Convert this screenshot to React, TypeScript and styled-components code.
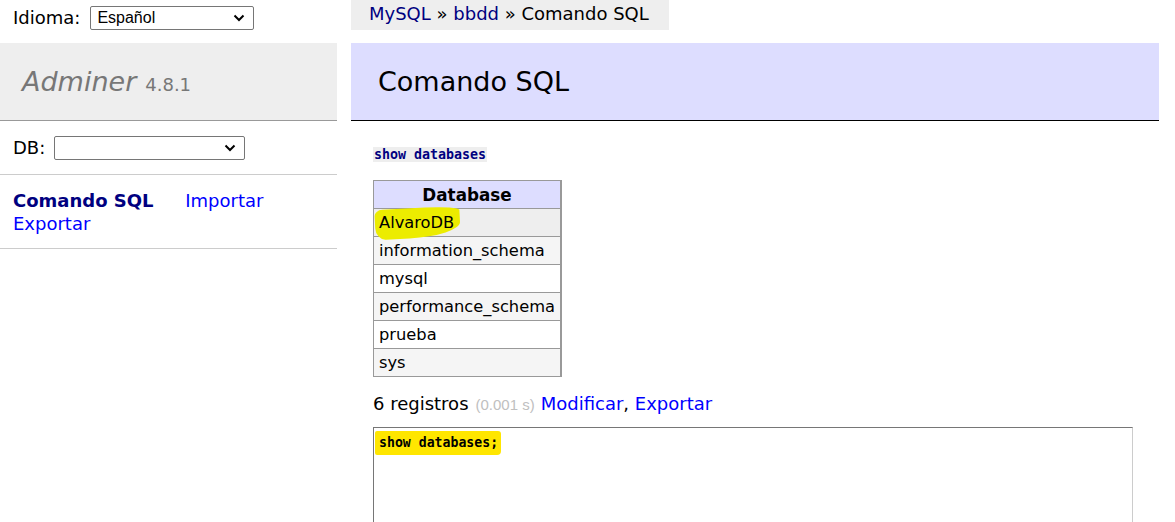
import React from "react";
import styled, { createGlobalStyle } from "styled-components";

const Global = createGlobalStyle`
  html, body { margin: 0; padding: 0; overflow: hidden; background: #fff; }
  body {
    font-family: "DejaVu Sans", Verdana, sans-serif;
    font-size: 18px;
    color: #000;
  }
`;

const Page = styled.div`
  display: flex;
  align-items: flex-start;
  width: 1175px;
  height: 522px;
`;

const Sidebar = styled.aside`
  width: 337px;
  flex: none;
  display: flex;
  flex-direction: column;
`;

const LangRow = styled.form`
  height: 43px;
  display: flex;
  align-items: center;
  padding: 0 0 8px 13px;
  gap: 10px;
  box-sizing: border-box;
  margin: 0;
`;

const FakeSelect = styled.div<{ $w: number }>`
  width: ${(p) => p.$w}px;
  height: 24px;
  box-sizing: border-box;
  border: 1px solid #767676;
  border-radius: 2px;
  background: #fff;
  display: flex;
  align-items: center;
  justify-content: space-between;
  padding: 0 8px 0 6px;
  font-family: "Liberation Sans", Arial, sans-serif;
  font-size: 16px;
  color: #000;
`;

const Logo = styled.h1`
  margin: 0;
  height: 78px;
  box-sizing: border-box;
  background: #eee;
  border-bottom: 1px solid #999;
  padding: 0 0 0 22px;
  display: flex;
  align-items: center;
  font-weight: normal;
  font-size: 27px;
  color: #777;
`;

const LogoName = styled.span`
  font-style: italic;
  margin-right: 9px;
`;

const Version = styled.span`
  font-size: 18px;
  color: #777;
  position: relative;
  top: 3px;
`;

const DbRow = styled.div`
  height: 54px;
  box-sizing: border-box;
  border-bottom: 1px solid #ccc;
  display: flex;
  align-items: center;
  padding-left: 13px;
  gap: 9px;
`;

const Links = styled.p`
  margin: 0;
  padding: 14px 13px 13px 13px;
  border-bottom: 1px solid #ccc;
  line-height: 23px;
`;

const Link = styled.a<{ $visited?: boolean; $bold?: boolean }>`
  color: ${(p) => (p.$visited ? "#000080" : "#0000ff")};
  text-decoration: none;
  font-weight: ${(p) => (p.$bold ? "bold" : "normal")};
  white-space: nowrap;
  margin-right: ${(p) => (p.$bold ? "26px" : "0")};
`;

const Content = styled.main`
  margin-left: 14px;
  width: 808px;
  flex: none;
  display: flex;
  flex-direction: column;
  align-items: flex-start;
`;

const Breadcrumb = styled.p`
  margin: 0;
  height: 30px;
  box-sizing: border-box;
  background: #eee;
  padding: 0 20px 3px 18px;
  display: flex;
  align-items: center;
  white-space: pre;
`;

const Title = styled.h2`
  margin: 13px 0 0 0;
  align-self: stretch;
  height: 78px;
  box-sizing: border-box;
  background: #ddf;
  border-bottom: 1px solid #000;
  display: flex;
  align-items: center;
  padding: 0 0 0 27px;
  font-size: 27px;
  font-weight: normal;
`;

const Body = styled.div`
  padding: 0 0 0 22px;
  display: flex;
  flex-direction: column;
  align-items: flex-start;
`;

const Query = styled.code`
  margin-top: 26px;
  background: #eee;
  color: #000080;
  font-family: "DejaVu Sans Mono", Consolas, monospace;
  font-weight: bold;
  font-size: 13.3px;
  line-height: 15px;
  padding: 0 1px;
`;

const Table = styled.table`
  margin-top: 18px;
  border-collapse: collapse;
  border: 1px solid #999;
  border-right-width: 2px;
  font-size: 16.3px;
`;

const Th = styled.th`
  background: #ddf;
  border: 1px solid #999;
  height: 27px;
  padding: 0 5px;
  font-weight: bold;
  font-size: 16.8px;
  text-align: center;
`;

const Td = styled.td<{ $bg: string }>`
  background: ${(p) => p.$bg};
  border: 1px solid #999;
  height: 27px;
  padding: 0 5px;
  white-space: nowrap;
`;

const Marker = styled.span`
  position: relative;
  display: inline-block;
`;

const MarkerBlob = styled.span`
  position: absolute;
  left: -4px;
  right: -6px;
  top: -5px;
  bottom: -6px;
  background: #ecec00;
  border-radius: 8px 40% 60% 10px / 6px 4px 14px 12px;
  transform: rotate(-3deg);
  z-index: 0;
`;

const MarkerText = styled.span`
  position: relative;
  z-index: 1;
`;

const Stats = styled.p`
  margin: 16px 0 0 0;
  display: flex;
  align-items: baseline;
  white-space: pre;
`;

const Time = styled.span`
  color: #c0c0c0;
  font-size: 15px;
  font-family: "Liberation Sans", Arial, sans-serif;
  margin: 0 6px 0 7px;
`;

const Editor = styled.div`
  margin-top: 13px;
  width: 760px;
  height: 140px;
  box-sizing: border-box;
  border-style: solid;
  border-width: 1px;
  border-color: #767676 #ccc #ccc #767676;
  padding: 2px 4px 2px 5px;
`;

const CodeLine = styled.span`
  display: inline-block;
  background: #ffe600;
  font-family: "DejaVu Sans Mono", Consolas, monospace;
  font-weight: bold;
  font-size: 13.2px;
  line-height: 24px;
  padding: 0 3px 0 4px;
  margin-left: -4px;
  border-radius: 2px 3px 4px 2px;
  color: #000;
`;

const Chevron = () => (
  <svg width="12" height="8" viewBox="0 0 12 8">
    <path d="M1.5 1.5 L6 6 L10.5 1.5" fill="none" stroke="#000" strokeWidth="2" />
  </svg>
);

const rows: [string, string][] = [
  ["AlvaroDB", "#eee"],
  ["information_schema", "#f5f5f5"],
  ["mysql", "#fff"],
  ["performance_schema", "#f5f5f5"],
  ["prueba", "#fff"],
  ["sys", "#f5f5f5"],
];

export default function App() {
  return (
    <>
      <Global />
      <Page>
        <Sidebar>
          <LangRow>
            <span>Idioma:</span>
            <FakeSelect $w={164}>
              <span>Español</span>
              <Chevron />
            </FakeSelect>
          </LangRow>
          <Logo>
            <LogoName>Adminer</LogoName>
            <Version>4.8.1</Version>
          </Logo>
          <DbRow>
            <span>DB:</span>
            <FakeSelect $w={191}>
              <span />
              <Chevron />
            </FakeSelect>
          </DbRow>
          <Links>
            <Link $visited $bold href="#">Comando SQL</Link>{" "}
            <Link href="#">Importar</Link>{" "}
            <Link href="#">Exportar</Link>
          </Links>
        </Sidebar>
        <Content>
          <Breadcrumb>
            <Link $visited href="#">MySQL</Link>
            {" » "}
            <Link $visited href="#">bbdd</Link>
            {" » Comando SQL"}
          </Breadcrumb>
          <Title>Comando SQL</Title>
          <Body>
            <Query>show databases</Query>
            <Table>
              <thead>
                <tr>
                  <Th>Database</Th>
                </tr>
              </thead>
              <tbody>
                {rows.map(([name, bg], i) => (
                  <tr key={name}>
                    <Td $bg={bg}>
                      {i === 0 ? (
                        <Marker>
                          <MarkerBlob />
                          <MarkerText>{name}</MarkerText>
                        </Marker>
                      ) : (
                        name
                      )}
                    </Td>
                  </tr>
                ))}
              </tbody>
            </Table>
            <Stats>
              6 registros<Time>(0.001 s)</Time>
              <Link href="#">Modificar</Link>, <Link href="#">Exportar</Link>
            </Stats>
            <Editor>
              <CodeLine>show databases;</CodeLine>
            </Editor>
          </Body>
        </Content>
      </Page>
    </>
  );
}
